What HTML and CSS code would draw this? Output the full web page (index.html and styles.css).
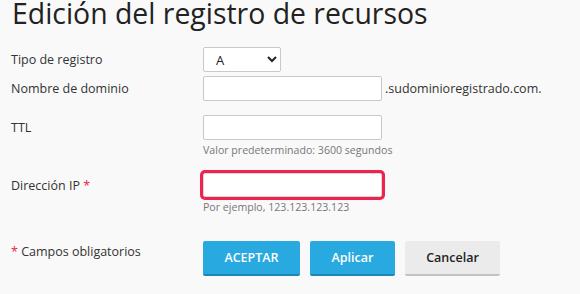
FILE: index.html
```html
<!DOCTYPE html>
<html lang="es">
<head>
<meta charset="UTF-8">
<meta name="viewport" content="width=device-width, initial-scale=1.0">
<title>Edición del registro de recursos</title>
<link rel="stylesheet" href="styles.css">
</head>
<body>
  <h1 class="title">Edición del registro de recursos</h1>
  <form class="record-form">
    <div class="row row-type">
      <label class="label" for="type">Tipo de registro</label>
      <div class="field">
        <select id="type" class="select">
          <option>A</option>
          <option>AAAA</option>
          <option>CNAME</option>
          <option>MX</option>
        </select>
      </div>
    </div>
    <div class="row row-domain">
      <label class="label" for="domain">Nombre de dominio</label>
      <div class="field field-inline">
        <input type="text" id="domain" class="input">
        <span class="suffix">.sudominioregistrado.com.</span>
      </div>
    </div>
    <div class="row row-ttl">
      <label class="label" for="ttl">TTL</label>
      <div class="field">
        <input type="text" id="ttl" class="input">
        <div class="hint">Valor predeterminado: 3600 segundos</div>
      </div>
    </div>
    <div class="row row-ip">
      <label class="label" for="ip">Dirección IP <span class="required">*</span></label>
      <div class="field">
        <input type="text" id="ip" class="input input-error">
        <div class="hint">Por ejemplo, 123.123.123.123</div>
      </div>
    </div>
    <div class="row row-buttons">
      <div class="label label-note"><span class="required">*</span> Campos obligatorios</div>
      <div class="buttons">
        <button type="submit" class="btn btn-primary btn-ok">ACEPTAR</button>
        <button type="button" class="btn btn-primary btn-apply">Aplicar</button>
        <button type="button" class="btn btn-cancel">Cancelar</button>
      </div>
    </div>
  </form>
</body>
</html>
```

FILE: styles.css
```css
body {
  margin: 0;
  padding: 0 11px;
  background-color: #f9f9f9;
  font-family: 'Open Sans', 'Liberation Sans', sans-serif;
  font-size: 12.5px;
  color: #333;
}
.title {
  margin: 0 0 21px 1px;
  font-size: 28.4px;
  font-weight: 400;
  line-height: 26px;
  color: #222;
}
.row {
  display: flex;
  align-items: flex-start;
}
.label {
  width: 192px;
  flex-shrink: 0;
  line-height: 25px;
  color: #333;
}
.field {
  display: flex;
  flex-direction: column;
}
.field-inline {
  flex-direction: row;
  align-items: center;
}
.row-type {
  margin-bottom: 4px;
}
.row-domain {
  margin-bottom: 14px;
}
.row-ttl {
  margin-bottom: 15px;
}
.row-ip {
  margin-bottom: 26px;
}
.select {
  width: 78px;
  height: 25px;
  padding: 0 4px 0 8px;
  background-color: #fff;
  border: 1px solid #c9c9c9;
  border-radius: 2px;
  font-family: inherit;
  font-size: 13px;
  color: #222;
}
.input {
  box-sizing: border-box;
  width: 179px;
  height: 25px;
  margin: 0;
  padding: 2px 6px;
  background-color: #fff;
  border: 1px solid #c9c9c9;
  border-radius: 2px;
  font-family: inherit;
  font-size: 13px;
}
.input:focus {
  outline: none;
}
.input-error {
  height: 24px;
  border-color: #d8d8d8;
  box-shadow: 0 0 0 3px #f0224e;
}
.suffix {
  margin-left: 3px;
  color: #333;
}
.hint {
  margin-top: 2px;
  font-size: 10.6px;
  line-height: 16px;
  color: #777;
}
.required {
  color: #e8234a;
}
.label-note {
  line-height: 21px;
}
.buttons {
  display: flex;
  gap: 10px;
}
.btn {
  box-sizing: border-box;
  height: 35px;
  padding: 0;
  border: none;
  border-bottom: 2px solid transparent;
  border-radius: 2px;
  font-family: inherit;
  font-size: 12.5px;
  font-weight: 600;
  cursor: pointer;
}
.btn-primary {
  background-color: #28a9df;
  border-bottom-color: #1c86b6;
  color: #fff;
}
.btn-ok {
  width: 97px;
}
.btn-apply {
  width: 85px;
}
.btn-cancel {
  width: 95px;
  background-color: #ebebeb;
  border-bottom-color: #c2c2c2;
  color: #222;
}
```
